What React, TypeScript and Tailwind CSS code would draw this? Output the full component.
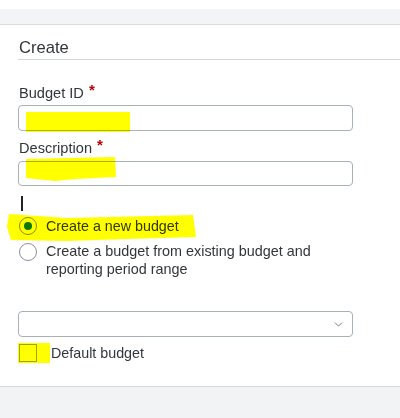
import { ChevronDown } from "lucide-react";

function Label({ text }: { text: string }) {
  return (
    <div className="flex h-[18px] items-center text-[14.6px] leading-[18px] text-[#32363a]">
      <span>{text}</span>
      <span className="ml-[5px] -mt-[6px] text-[15px] font-bold text-[#bb0000]">*</span>
    </div>
  );
}

function Highlight({ className, points, w, h }: { className: string; points: string; w: number; h: number }) {
  return (
    <svg
      className={`pointer-events-none absolute mix-blend-multiply ${className}`}
      width={w}
      height={h}
      viewBox={`0 0 ${w} ${h}`}
    >
      <polygon points={points} fill="#ffff00" />
    </svg>
  );
}

export default function App() {
  return (
    <div
      className="relative h-[418px] w-[400px] overflow-hidden bg-white"
      style={{ fontFamily: '"Liberation Sans", Arial, sans-serif' }}
    >
      <div className="h-[9px] bg-white" />
      <div className="h-[16px] border-b border-[#d9dcde] bg-[#f2f4f5]" />

      <div className="h-[361px] pl-[18px] pt-[13px]">
        <div className="flex h-[22px] items-start border-b border-[#d3d6d8] pl-px text-[16.6px] leading-[20px] text-[#32363a]">
          Create
        </div>

        <div className="mt-[24px] pl-px">
          <Label text="Budget ID" />
        </div>
        <div className="mt-[3px] h-[26px] w-[335px] rounded-[4px] border border-[#a9b1b8] bg-white" />

        <div className="mt-[8px] pl-px">
          <Label text="Description" />
        </div>
        <div className="mt-[4px] h-[25px] w-[335px] rounded-[4px] border border-[#a9b1b8] bg-white" />

        <div className="ml-[3px] mt-[10px] h-[15px] w-[2px] bg-[#222]" />

        <div className="mt-[6px] flex items-center gap-[9px]">
          <div className="ml-px flex h-[18px] w-[18px] shrink-0 items-center justify-center rounded-full border border-[#89919a] bg-white">
            <div className="h-[8px] w-[8px] rounded-full bg-[#0b7a2e]" />
          </div>
          <span className="text-[14.3px] leading-[18px] text-[#32363a]">Create a new budget</span>
        </div>

        <div className="mt-[7px] flex items-start gap-[9px]">
          <div className="ml-px mt-px h-[18px] w-[18px] shrink-0 rounded-full border border-[#89919a] bg-white" />
          <span className="w-[290px] text-[14.4px] leading-[18px] text-[#32363a]">
            Create a budget from existing budget and reporting period range
          </span>
        </div>

        <div className="mt-[33px] flex h-[26px] w-[335px] items-center justify-end rounded-[4px] border border-[#a9b1b8] bg-white pr-[7px]">
          <ChevronDown size={13} strokeWidth={1.6} className="text-[#6a6d70]" />
        </div>

        <div className="mt-[6px] flex h-[20px] items-center">
          <div className="flex h-[20px] w-[32px] items-center bg-[#ffff00] pl-px">
            <div className="h-[18px] w-[18px] border border-[#a3a300]" />
          </div>
          <span className="ml-px text-[14.3px] leading-[18px] text-[#32363a]">Default budget</span>
        </div>
      </div>

      <div className="h-[32px] border-t border-[#d5d9dc] bg-[#f2f3f4]" />

      <Highlight className="left-[26px] top-[112px]" w={104} h={20} points="0,0 104,0 104,20 0,20" />
      <Highlight
        className="left-[25px] top-[157px]"
        w={92}
        h={24}
        points="1,2 90,0 91,20 50,22 30,24 1,21"
      />
      <Highlight
        className="left-[7px] top-[211px]"
        w={190}
        h={31}
        points="2,3 60,7 186,4 189,26 120,28 60,30 4,29 0,16"
      />
    </div>
  );
}
